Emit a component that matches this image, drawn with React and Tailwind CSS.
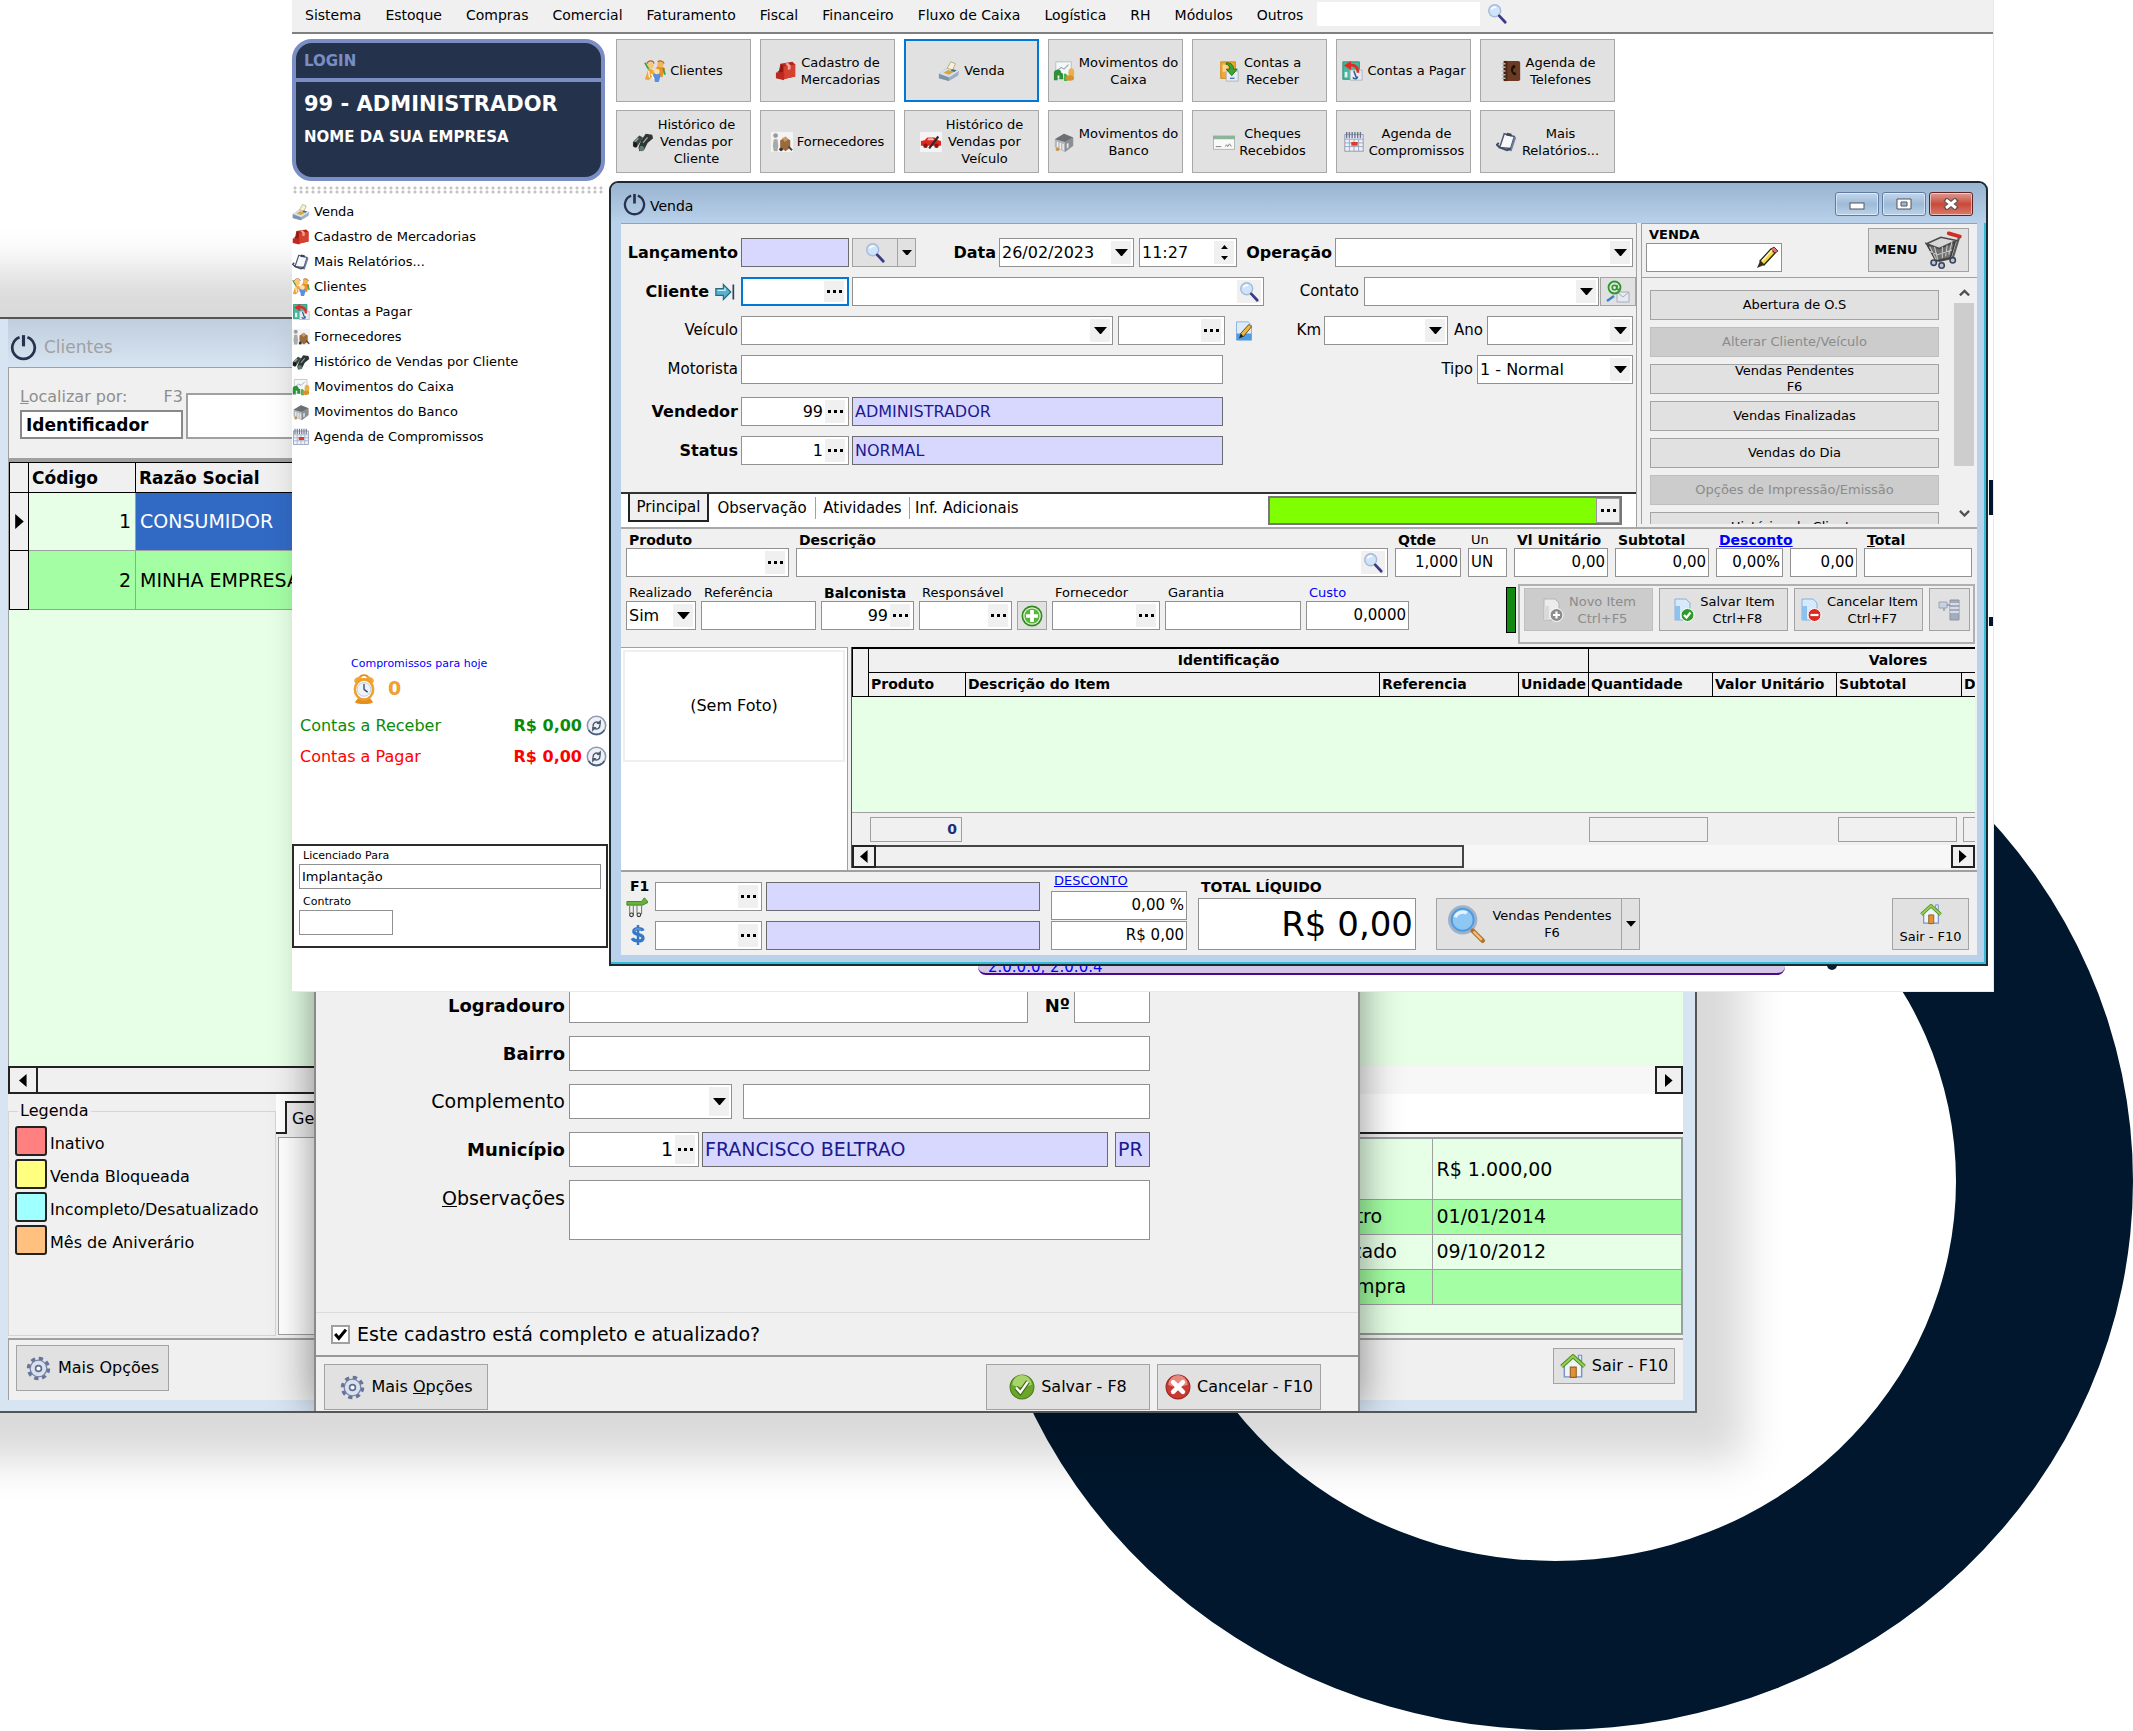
import clsx from 'clsx';

/* ---------- icons ---------- */

const Svg = ({ className = 'size-[22px]', children }) => (
  <svg viewBox="0 0 24 24" className={clsx('shrink-0', className)} fill="none" aria-hidden="true">
    {children}
  </svg>
);

const PowerIcon = ({ className }) => (
  <Svg className={className}>
    <path d="M8.5 2.8a10 10 0 1 0 7 0" stroke="#27324f" strokeWidth="2.4" />
    <path d="M12 1v10" stroke="#27324f" strokeWidth="2.8" />
  </Svg>
);

const ClientsIcon = ({ className }) => (
  <Svg className={className}>
    <path d="M1 21 5 9l5 2 3 10-4-3-4 4z" fill="#f0a73a" />
    <path d="m11 12 5-7 7 4-3 10-4-2-4 3z" fill="#e8912a" />
    <path d="M10 16c2-4 8-2 8 2l-2 6h-4z" fill="#5b8fe0" />
    <circle cx="7" cy="6" r="3.600" fill="#f6c777" />
    <circle cx="18" cy="4.500" r="3.400" fill="#f3b45a" />
    <circle cx="14" cy="12.500" r="3" fill="#fbe0ae" />
    <path d="M1 3l4 7M21 9l2 7" stroke="#3f9e45" strokeWidth="1.800" />
    <path d="M8 15l3 6M5 12l1 7" stroke="#fff" strokeWidth="1.300" />
    <path d="M3 4c2-4 7-4 8 0M15 2c2-2 6-1 7 2" stroke="#a8651a" strokeWidth="1.200" />
  </Svg>
);

const GoodsIcon = ({ className }) => (
  <Svg className={className}>
    <path d="M6 4 19 2l3 3v13l-13 3-6-4z" fill="#b5261b" />
    <path d="M9 7 22 5v13L9 21z" fill="#d6402f" />
    <path d="m6 4 3 3v6L1 14l5-3z" fill="#8c1912" />
    <path d="M1 14h9v8l-9-2z" fill="#c0281e" />
    <path d="M11 4l3 3v4l3-1V6l-3-3z" fill="#f2a397" />
  </Svg>
);

const RegisterIcon = ({ className }) => (
  <Svg className={className}>
    <path d="m1 15 8-6 14 3-1 5-10 6-11-3z" fill="#9aaec4" />
    <path d="m1 15 8-6 14 3-11 7z" fill="#d5dfe9" />
    <path d="m10 9 4-7 5 2-3 7z" fill="#f6f1d8" stroke="#b5aa7c" />
    <path d="m6 14 5-3 6 2-5 3z" fill="#d9a636" />
    <path d="m15 10 5 1-2 2-4-1z" fill="#50657f" />
    <path d="m1 15 11 4v4L1 20z" fill="#7f93ab" />
  </Svg>
);

const CashFlowIcon = ({ className }) => (
  <Svg className={className}>
    <path d="M3 2h17v18H3z" fill="#f4f6f8" stroke="#b5bcc4" />
    <path d="m5 11 4-3 3 2 5-5" stroke="#8ea5bd" strokeWidth="1.200" />
    <path d="M1 15a4 4 0 0 1 8-1l2 1v6H7v-4H5v5H1z" fill="#2f9137" />
    <path d="M12 15a3 3 0 0 1 4 3v5h-4z" fill="#4bb553" />
    <ellipse cx="20" cy="14" rx="3.200" ry="5" fill="#eab04a" />
    <ellipse cx="18.500" cy="19.500" rx="4.500" ry="3" fill="#d9912c" />
  </Svg>
);

const ReceiveIcon = ({ className }) => (
  <Svg className={className}>
    <path d="M3 2h16v18H3z" fill="#f5a831" stroke="#cf8418" />
    <path d="M5 5h6v8H5z" fill="#fcd48c" />
    <path d="M9 12h13v11H9z" fill="#e9edf2" stroke="#a9b3be" />
    <path d="M9 3c6 0 8 3 8 7h4l-6 7-6-7h4c0-3-1-5-4-5z" fill="#3ba535" stroke="#1f6f1b" />
    <path d="M13 20h5" stroke="#4a78b5" strokeWidth="1.500" />
  </Svg>
);

const PayIcon = ({ className }) => (
  <Svg className={className}>
    <path d="M2 2h18v19H2z" fill="#48b79d" stroke="#2b8b76" />
    <path d="M10 11h13v11H10z" fill="#e9edf2" stroke="#a9b3be" />
    <path d="M17 14c0-6-3-7-6-7v4L3 6l8-5v3c6 0 9 3 9 10z" fill="#e52a22" />
    <path d="M14 12l3 8M13 19c1 2 5 2 5-1" stroke="#2c5f9d" strokeWidth="1.700" />
    <path d="M4 13h3v6H4z" fill="#dff4ee" />
  </Svg>
);

const PhoneBookIcon = ({ className }) => (
  <Svg className={className}>
    <rect x="4" y="1" width="18" height="22" rx="2" fill="#6b3a22" />
    <rect x="4" y="1" width="4" height="22" fill="#4a2614" />
    <path d="M2 4h4M2 8h4M2 12h4M2 16h4M2 20h4" stroke="#b9b9b9" strokeWidth="1.600" />
    <path d="M13 7c-2 3-1 7 3 10l2-2-2-2-1 1c-1-2-1-4 0-5l1 0 1-2-2-2z" fill="#1d0f08" />
  </Svg>
);

const BinocularsIcon = ({ className }) => (
  <Svg className={className}>
    <path d="m1 12 7-7 4 2-3 5-4 6-4-1z" fill="#3f4744" />
    <path d="m10 10 5-7 7 1 1 4-6 5-4 8-5 1-1-4z" fill="#2e3533" />
    <path d="m3 12 4-4M12 13l5-6" stroke="#9ba5a1" strokeWidth="1.500" />
    <ellipse cx="10.500" cy="19" rx="2.600" ry="3" fill="#5d7d72" />
    <ellipse cx="3.500" cy="15" rx="2" ry="3" fill="#151918" />
  </Svg>
);

const SupplierIcon = ({ className }) => (
  <Svg className={className}>
    <path d="M0 1h24v22H0z" fill="#f4f4f4" />
    <circle cx="5" cy="5" r="2.600" fill="#9b9b9b" />
    <path d="M3 9h4l1 7-1 6H3l-1-6z" fill="#a9a9a9" />
    <path d="m10 10 6-3 5 3v8l-5 4-6-4z" fill="#9a6a3d" />
    <path d="m12 8 4-2 3 3-4 3z" fill="#c99a64" />
    <circle cx="11" cy="20" r="2" fill="#333" />
    <path d="m19 17 4 4" stroke="#444" strokeWidth="2" />
  </Svg>
);

const CarIcon = ({ className }) => (
  <Svg className={className}>
    <path d="M0 1h24v22H0z" fill="#f4f4f4" />
    <path d="m1 11 4-1 3-3h8l4 3 3 1v5H1z" fill="#e0261d" />
    <path d="m8 10 1-2h5l2 2z" fill="#f7b8b4" />
    <circle cx="6" cy="16" r="2.500" fill="#8d1410" />
    <circle cx="18" cy="16" r="2.500" fill="#8d1410" />
    <path d="m10 19 10-13" stroke="#2c2c2c" strokeWidth="2.400" />
  </Svg>
);

const BankIcon = ({ className }) => (
  <Svg className={className}>
    <path d="m2 9 10-6 10 4v9l-9 7-11-5z" fill="#b4b7ba" />
    <path d="m2 9 10-6 10 4-9 5z" fill="#6b6f74" />
    <path d="M13 12v11l9-7V7z" fill="#8b8f94" />
    <path d="M5 12v6M8 13v7M11 14v7" stroke="#f0f0f0" strokeWidth="1.500" />
    <path d="M15 14v5l2-1v-5z" fill="#e2e4e6" />
    <circle cx="5" cy="20" r="2" fill="#c7924b" />
  </Svg>
);

const ChequeIcon = ({ className }) => (
  <Svg className={className}>
    <rect x="0.500" y="6" width="23" height="14" fill="#f8faf8" stroke="#aab5ad" />
    <path d="M0 5h24v4H0z" fill="#8fb39a" />
    <path d="M3 17h6M13 17l2-2 1 2 2-3 2 3" stroke="#777" />
  </Svg>
);

const CalendarIcon = ({ className }) => (
  <Svg className={className}>
    <rect x="2" y="4" width="20" height="18" fill="#eef1f7" stroke="#8b95ad" />
    <path d="M4 1v7M7 1v7M10 1v7M13 1v7M16 1v7M19 1v7" stroke="#6a7590" strokeWidth="1.500" />
    <path d="M2 9h20M7 9v13M12 9v13M17 9v13M2 13h20M2 17h20" stroke="#9aa5c0" />
    <path d="M9 12h7v4H9z" fill="#e23a28" />
  </Svg>
);

const ReportIcon = ({ className }) => (
  <Svg className={className}>
    <path d="m9 3 11 3-4 13-12-1z" fill="#f7f8fa" stroke="#4d596e" strokeWidth="1.600" />
    <path d="m20 6 2 1-5 15-5-1 4-2z" fill="#6e809c" />
    <path d="m4 18-3-3 2-2M4 18l8 3 4-2" stroke="#3c4a63" strokeWidth="2" />
    <path d="m12 2 5 1v3l-6-1z" fill="#37445c" />
  </Svg>
);

const SearchIcon = ({ className }) => (
  <Svg className={className}>
    <circle cx="9.500" cy="8.500" r="6.500" fill="#cfe3fa" stroke="#a5bbd9" strokeWidth="1.600" />
    <path d="M6 7c1-2 3-3 5-2" stroke="#fff" strokeWidth="1.800" />
    <path d="m14.500 14 6.500 7" stroke="#3b3a86" strokeWidth="3" strokeLinecap="round" />
  </Svg>
);

const BigSearchIcon = ({ className }) => (
  <Svg className={className}>
    <circle cx="10" cy="9.500" r="8" fill="#4e9be0" stroke="#9fb2ca" strokeWidth="1.600" />
    <circle cx="10" cy="9.500" r="6" fill="#8ec6f4" />
    <path d="M5.500 8c1-3 5-4 7-2.500" stroke="#e4f3ff" strokeWidth="2" />
    <path d="m16 16 6 6" stroke="#b3712c" strokeWidth="2.800" strokeLinecap="round" />
    <path d="m16.500 16.500 5 5" stroke="#f2c078" strokeWidth="1.400" />
  </Svg>
);

const GearIcon = ({ className }) => (
  <Svg className={className}>
    <circle cx="12" cy="12" r="9.500" stroke="#65749c" strokeWidth="3.500" strokeDasharray="4 3.460" />
    <circle cx="12" cy="12" r="8" fill="#d9e1f0" stroke="#75839f" strokeWidth="1.200" />
    <circle cx="12" cy="12" r="2.800" fill="#f7f9fd" stroke="#5f6e8e" strokeWidth="1.600" />
  </Svg>
);

const HouseIcon = ({ className }) => (
  <Svg className={className}>
    <path d="M4 11v11h16V11l-8-7z" fill="#eef3fc" stroke="#7691c9" strokeWidth="1.300" />
    <path d="M17 2h3v6l-3-3z" fill="#dfe8f8" stroke="#7691c9" />
    <path d="M1.500 12.500 12 3l10.500 9.500" stroke="#4f8c1f" strokeWidth="3.800" strokeLinejoin="round" />
    <path d="M1.500 12.500 12 3l10.500 9.500" stroke="#93cf55" strokeWidth="2" strokeLinejoin="round" />
    <path d="M9.500 13h5.500v9.500H9.500z" fill="#dc9339" stroke="#9c5d17" />
  </Svg>
);

const CheckIcon = ({ className }) => (
  <Svg className={className}>
    <circle cx="12" cy="12" r="11" fill="#6ba52c" stroke="#4c7d1c" />
    <path d="M3 10a9 9 0 0 1 18 0c-5 2-13 3-18 0z" fill="#a9d36c" />
    <path d="m6.500 12.500 4 4.500L17.500 7" stroke="#3f6a14" strokeWidth="4.200" />
    <path d="m6.500 12.500 4 4.500L17.500 7" stroke="#fff" strokeWidth="2.200" />
  </Svg>
);

const CancelIcon = ({ className }) => (
  <Svg className={className}>
    <circle cx="12" cy="12" r="11" fill="#c93a33" stroke="#9c231e" />
    <path d="M3 10a9 9 0 0 1 18 0c-5 2-13 3-18 0z" fill="#e68a80" />
    <path d="m7.500 7.500 9 9m0-9-9 9" stroke="#fff" strokeWidth="4.200" strokeLinecap="round" />
  </Svg>
);

const PlusIcon = ({ className }) => (
  <Svg className={className}>
    <circle cx="12" cy="12" r="10.500" fill="#e9f7e2" stroke="#2e8b1c" strokeWidth="1.800" />
    <circle cx="12" cy="12" r="8.300" fill="#58b63c" />
    <path d="M12 5.500v13M5.500 12h13" stroke="#fff" strokeWidth="4" />
  </Svg>
);

const PencilIcon = ({ className }) => (
  <Svg className={className}>
    <path d="m5 15 11-12 4 4L9 19z" fill="#f5d640" stroke="#2a2410" strokeWidth="1.400" />
    <path d="m16 3 3-2 4 4-3 2z" fill="#e46f6f" stroke="#6b2a2a" />
    <path d="m5 15 4 4-7 3z" fill="#3a2c18" />
    <path d="m7 15 10-11" stroke="#fff6b8" strokeWidth="1.500" />
  </Svg>
);

const EditPageIcon = ({ className }) => (
  <Svg className={className}>
    <path d="M3 1h14l4 4v18H3z" fill="#dcecfa" stroke="#7faad6" />
    <path d="M3 15h18v8H3z" fill="#4d9be0" />
    <path d="m8 15 10-11 3 3-10 12z" fill="#f0b73c" stroke="#4b3510" />
    <path d="m8 15 3 4-5 2z" fill="#2d2110" />
  </Svg>
);

const CartIcon = ({ className }) => (
  <Svg className={className}>
    <path d="M15 1.500l7 2" stroke="#cf2d25" strokeWidth="2.400" strokeLinecap="round" />
    <path d="m21.500 4-4 13-9 2" stroke="#5b5b5b" strokeWidth="1.400" />
    <path d="m1 8 8 3 10-4-3 10-9 2z" fill="#6f6f6f" stroke="#3d3d3d" />
    <path d="m1 8 9-4 10 2-11 5z" fill="#d7d7d7" stroke="#4a4a4a" />
    <path d="m3 10 4 8m-1-8 2 8m3-8v7m3-8-1 7m4-9-2 8M3 13l5 2 9-3" stroke="#c6c6c6" strokeWidth="0.700" />
    <circle cx="5.500" cy="20" r="1.700" fill="#b9c4e0" stroke="#3b4358" />
    <circle cx="10.500" cy="21.800" r="1.700" fill="#b9c4e0" stroke="#3b4358" />
    <circle cx="17.500" cy="18.500" r="1.700" fill="#b9c4e0" stroke="#3b4358" />
  </Svg>
);

const MailIcon = ({ className }) => (
  <Svg className={className}>
    <path d="M11 12h12v10H11z" fill="#e6e9f0" stroke="#a6adbd" />
    <path d="m11 12 6 5 6-5" stroke="#a6adbd" />
    <circle cx="8.500" cy="7.500" r="6" stroke="#2f9a2c" strokeWidth="1.800" />
    <circle cx="8.500" cy="7.500" r="2.300" stroke="#2f9a2c" strokeWidth="1.600" />
    <path d="M11 5v4c1 1 3 1 3.500-1" stroke="#2f9a2c" strokeWidth="1.600" />
    <path d="m1 21 7-5" stroke="#3a7fd0" strokeWidth="2.400" />
  </Svg>
);

const JumpIcon = ({ className }) => (
  <Svg className={className}>
    <path d="M1 8h9V3l9 9-9 9v-5H1z" fill="#55b3cf" stroke="#246a83" strokeWidth="1.400" />
    <path d="M3 10h9V7" stroke="#c9edf7" strokeWidth="1.600" />
    <path d="M22 3v18" stroke="#2d3f5a" strokeWidth="2" />
  </Svg>
);

const TableIcon = ({ className }) => (
  <Svg className={className}>
    <path d="M1 6h16l3-4 2 2 2 3-6 3H1z" fill="#66b53a" stroke="#447e22" />
    <path d="M4 11v8M8 11v10M12 11v8M17 11v9" stroke="#7b7f7b" strokeWidth="1.200" />
    <circle cx="6" cy="20.500" r="2" stroke="#333" strokeWidth="1.200" />
    <circle cx="14" cy="20.500" r="2" stroke="#333" strokeWidth="1.200" />
  </Svg>
);

const DollarIcon = ({ className }) => (
  <Svg className={className}>
    <path d="M18 7c-1-3-11-4-11 1 0 4 11 2.500 11 7.500 0 5-11 4.500-13 .5" stroke="#3578c4" strokeWidth="4" />
    <path d="M12 0v24" stroke="#3578c4" strokeWidth="3" />
    <path d="M16 6c-2-2-8-2-8 1" stroke="#7db2ea" strokeWidth="1.200" />
  </Svg>
);

const AlarmIcon = ({ className }) => (
  <svg viewBox="0 0 24 34" className={clsx('shrink-0', className)} fill="none" aria-hidden="true">
    <path d="M7 6c1-5 9-5 10 0" stroke="#e08e1d" strokeWidth="2" />
    <ellipse cx="5.500" cy="7.500" rx="4.500" ry="3" fill="#f2a733" transform="rotate(-30 5.500 7.500)" />
    <ellipse cx="18.500" cy="7.500" rx="4.500" ry="3" fill="#f2a733" transform="rotate(30 18.500 7.500)" />
    <path d="M6 27h12l4 5c-5 3-15 3-20 0z" fill="#e58f1c" />
    <ellipse cx="12" cy="18" rx="10" ry="11" fill="#fff" stroke="#ef9f2b" strokeWidth="2.800" />
    <circle cx="12" cy="18" r="7.500" fill="#eef2fa" stroke="#b9c5dc" />
    <path d="M12 18v-6m0 6 4 3" stroke="#3c4a70" strokeWidth="1.500" />
  </svg>
);

const RefreshIcon = ({ className }) => (
  <Svg className={className}>
    <circle cx="12" cy="12" r="10.500" fill="#eef2f6" stroke="#8d9aae" strokeWidth="1.800" />
    <path d="M3 17a10.500 10.500 0 0 0 18 0" stroke="#4a5f80" strokeWidth="2" />
    <path d="M8 13c0-5 4-6 7-4M16 11c0 5-4 6-7 4" stroke="#4c5a70" strokeWidth="1.700" />
    <path d="m17 5 0 6-5-1zM7 19l0-6 5 1z" fill="#4c5a70" />
  </Svg>
);

const DocIcon = ({ className, badge = '#2f9a2c', mark = 'm10.500 17 2.500 2.500 4-5', muted }) => (
  <Svg className={className}>
    <path d="M3 1h11l4 4v17H3z" fill={muted ? '#ececec' : '#d7e9fa'} stroke={muted ? '#b5b5b5' : '#86b1dc'} />
    <path d="M3 8h5v14H3z" fill={muted ? '#dadada' : '#8cc2f0'} />
    <circle cx="15.500" cy="17" r="6.500" fill={badge} stroke="#fff" />
    <path d={mark} transform="translate(1.500 0)" stroke="#fff" strokeWidth="2.200" />
  </Svg>
);

const ServerIcon = ({ className }) => (
  <Svg className={className}>
    <path d="M12 2h9v20h-9z" fill="#a3adbd" stroke="#8a94a5" />
    <path d="M12 6h9M12 10h9M12 14h9" stroke="#e6ebf3" strokeWidth="1.500" />
    <path d="M1 4h8v6H1z" fill="#c8d2e2" stroke="#9aa4b6" />
    <path d="M9 7h3M6 10v3" stroke="#8a94a5" strokeWidth="1.300" />
  </Svg>
);

const Triangle = ({ className = 'w-[13px]', d = 'M0 0h12L6 7z', box = '0 0 12 7' }) => (
  <svg viewBox={box} className={className} aria-hidden="true">
    <path d={d} fill="#000" />
  </svg>
);

const Dots = () => (
  <svg viewBox="0 0 15 3" className="w-[15px]" aria-hidden="true">
    <path d="M0 0h3v3H0zM6 0h3v3H6zM12 0h3v3h-3z" fill="#000" />
  </svg>
);

/* ---------- form controls ---------- */

const Field = ({ id, label, value = '', className, locked, focused, right, size = 'text-[16px]', h = 'h-[29px]', children }) => (
  <div
    className={clsx(
      'flex min-w-0 border',
      h,
      className,
      locked ? 'border-[#6c6c70] bg-[#d8d8ff]' : 'bg-white',
      focused ? 'border-2 border-[#0078d7]' : !locked && 'border-[#919191]',
    )}
  >
    <input
      id={id}
      aria-label={label}
      defaultValue={value}
      readOnly={locked}
      className={clsx(
        'w-full min-w-0 flex-1 bg-transparent px-[2px] outline-none',
        size,
        locked && 'text-[#1b1b8f]',
        right && 'text-right',
      )}
    />
    {children}
  </div>
);

const Lookup = ({ label = 'Localizar' }) => (
  <button type="button" aria-label={label} className="my-[2px] mr-[3px] flex w-[20px] shrink-0 items-center justify-center bg-[#f0f0f0]">
    <Dots />
  </button>
);

const Select = ({ id, label, value = '', className, h = 'h-[29px]' }) => (
  <div className={clsx('flex min-w-0 border border-[#919191] bg-white', h, className)}>
    <select id={id} aria-label={label} className="w-full min-w-0 flex-1 appearance-none bg-transparent px-[2px] text-[16px] outline-none">
      <option>{value}</option>
    </select>
    <span className="my-[2px] mr-[2px] flex w-[20px] shrink-0 items-center justify-center bg-[#f0f0f0]">
      <Triangle />
    </span>
  </div>
);

const Label = ({ htmlFor, bold, size, className, children }) => (
  <label
    htmlFor={htmlFor}
    className={clsx(
      'shrink-0 text-right whitespace-nowrap',
      bold && 'font-bold',
      size || (bold ? 'text-[16px]' : 'text-[15px]'),
      className,
    )}
  >
    {children}
  </label>
);

const Stacked = ({ id, label, bold, className, labelClass, children }) => (
  <div className={clsx('flex flex-col', className)}>
    <label
      htmlFor={id}
      className={clsx('h-[16px] pl-[3px] leading-[16px] whitespace-nowrap', bold ? 'text-[14px] font-bold' : 'text-[13px]', labelClass)}
    >
      {label}
    </label>
    {children}
  </div>
);

const PushButton = ({ className, disabled, children, ...rest }) => (
  <button
    type="button"
    disabled={disabled}
    className={clsx(
      'flex shrink-0 items-center justify-center border',
      disabled ? 'border-[#bfbfbf] bg-[#cccccc] text-[#8b8b8b]' : 'border-[#a3a3a3] bg-[#e1e1e1]',
      className,
    )}
    {...rest}
  >
    {children}
  </button>
);

/* ---------- main window ---------- */

const menuItems = [
  'Sistema', 'Estoque', 'Compras', 'Comercial', 'Faturamento', 'Fiscal',
  'Financeiro', 'Fluxo de Caixa', 'Logística', 'RH', 'Módulos', 'Outros',
];

const toolbar = [
  { icon: ClientsIcon, lines: ['Clientes'] },
  { icon: GoodsIcon, lines: ['Cadastro de', 'Mercadorias'] },
  { icon: RegisterIcon, lines: ['Venda'], active: true },
  { icon: CashFlowIcon, lines: ['Movimentos do', 'Caixa'] },
  { icon: ReceiveIcon, lines: ['Contas a', 'Receber'] },
  { icon: PayIcon, lines: ['Contas a Pagar'] },
  { icon: PhoneBookIcon, lines: ['Agenda de', 'Telefones'] },
  { icon: BinocularsIcon, lines: ['Histórico de', 'Vendas por', 'Cliente'] },
  { icon: SupplierIcon, lines: ['Fornecedores'] },
  { icon: CarIcon, lines: ['Histórico de', 'Vendas por', 'Veículo'] },
  { icon: BankIcon, lines: ['Movimentos do', 'Banco'] },
  { icon: ChequeIcon, lines: ['Cheques', 'Recebidos'] },
  { icon: CalendarIcon, lines: ['Agenda de', 'Compromissos'] },
  { icon: ReportIcon, lines: ['Mais', 'Relatórios...'] },
];

const shortcuts = [
  [RegisterIcon, 'Venda'],
  [GoodsIcon, 'Cadastro de Mercadorias'],
  [ReportIcon, 'Mais Relatórios...'],
  [ClientsIcon, 'Clientes'],
  [PayIcon, 'Contas a Pagar'],
  [SupplierIcon, 'Fornecedores'],
  [BinocularsIcon, 'Histórico de Vendas por Cliente'],
  [CashFlowIcon, 'Movimentos do Caixa'],
  [BankIcon, 'Movimentos do Banco'],
  [CalendarIcon, 'Agenda de Compromissos'],
];

const MenuBar = () => (
  <nav className="flex h-[34px] items-start border-b-2 border-[#808080] bg-[#f0f0f0] pl-[13px]">
    <ul className="flex h-[31px] items-center gap-[24px] text-[14px] whitespace-nowrap">
      {menuItems.map((item) => (
        <li key={item}>
          <button type="button">{item}</button>
        </li>
      ))}
    </ul>
    <input aria-label="Pesquisar no menu" className="mt-[2px] ml-[14px] h-[24px] w-[163px] bg-white outline-none" />
    <SearchIcon className="mt-[3px] ml-[6px] size-[22px]" />
  </nav>
);

const Toolbar = () => (
  <div className="flex flex-wrap gap-x-[9px] gap-y-[8px] pt-[5px] pb-[8px] pl-[7px] pr-[370px]">
    {toolbar.map(({ icon: Icon, lines, active }) => (
      <button
        key={lines.join(' ')}
        type="button"
        className={clsx(
          'flex h-[63px] w-[135px] items-center justify-center gap-[4px] bg-[#e1e1e1] text-[13px] leading-[17px] whitespace-nowrap',
          active ? 'border-2 border-[#0078d7]' : 'border border-[#a8a8a8]',
        )}
      >
        <Icon className="size-[22px]" />
        <span className="flex flex-col">
          {lines.map((line) => (
            <span key={line}>{line}</span>
          ))}
        </span>
      </button>
    ))}
  </div>
);

const Balance = ({ label, tone }) => (
  <div className={clsx('flex h-[31px] items-center pr-[2px] pl-[8px] text-[16px]', tone)}>
    <span className="flex-1">{label}</span>
    <strong>R$ 0,00</strong>
    <button type="button" aria-label={`Atualizar ${label}`} className="ml-[4px]">
      <RefreshIcon className="size-[21px]" />
    </button>
  </div>
);

const Sidebar = () => (
  <aside className="flex w-[317px] shrink-0 flex-col pt-[5px]">
    <div className="flex h-[142px] w-[313px] flex-col rounded-[20px] border-4 border-[#7a8dc4] bg-[#24334b] font-bold text-white">
      <div className="flex h-[39px] items-center border-b-4 border-[#7a8dc4] pt-[2px] pl-[8px] text-[15px] text-[#7a8dc4]">LOGIN</div>
      <div className="mt-[6px] pl-[8px] text-[21px] leading-[32px]">99 - ADMINISTRADOR</div>
      <div className="pl-[8px] text-[15px] leading-[34px]">NOME DA SUA EMPRESA</div>
    </div>
    <div className="mt-[5px] h-[8px] w-[313px] bg-[radial-gradient(circle,#c4c4c4_1px,transparent_2px)] bg-[size:6px_4px]" />
    <ul className="mt-[5px] text-[13px]">
      {shortcuts.map(([Icon, text]) => (
        <li key={text}>
          <button type="button" className="flex h-[25px] items-center gap-[4px]">
            <Icon className="size-[18px]" />
            {text}
          </button>
        </li>
      ))}
    </ul>
    <div className="mt-auto mb-[72px]">
      <div className="pl-[59px] text-[11px] leading-[16px] text-[#0000ff]">Compromissos para hoje</div>
      <div className="mb-[6px] flex h-[32px] items-center gap-[13px] pl-[61px] text-[19px] font-bold text-[#f0a030]">
        <AlarmIcon className="h-[31px] w-[22px]" />0
      </div>
      <Balance label="Contas a Receber" tone="text-[#0a8a0a]" />
      <Balance label="Contas a Pagar" tone="text-[#ff0000]" />
    </div>
    <div className="mb-[43px] flex h-[104px] w-[316px] flex-col border-2 border-[#2b2b2b] px-[5px] pt-[2px]">
      <label htmlFor="licenciado" className="pl-[4px] text-[11px] leading-[16px]">Licenciado Para</label>
      <Field id="licenciado" value="Implantação" size="text-[13px]" h="h-[25px]" />
      <label htmlFor="contrato" className="mt-[5px] pl-[4px] text-[11px] leading-[16px]">Contrato</label>
      <Field id="contrato" size="text-[13px]" h="h-[25px]" className="w-[94px]" />
    </div>
  </aside>
);

const CaptionButton = ({ label, danger, children }) => (
  <button
    type="button"
    aria-label={label}
    className={clsx(
      'flex h-[24px] w-[44px] items-center justify-center rounded-[3px] border shadow-[inset_0_0_0_1px_rgba(255,255,255,0.5)]',
      danger
        ? 'border-[#5d2222] bg-linear-to-b from-[#dc9a92] via-[#c8493a] to-[#d9796a]'
        : 'border-[#5f7ba0] bg-linear-to-b from-[#c3d6ec] via-[#9dbad8] to-[#bcd3ec]',
    )}
  >
    {children}
  </button>
);

const TitleBar = () => (
  <header className="flex h-[40px] items-center rounded-t-[8px] bg-linear-to-b from-[#99b4d1] to-[#b9d1ea] pt-[2px] pr-[13px] pl-[12px]">
    <PowerIcon className="size-[23px]" />
    <h2 className="ml-[4px] flex-1 pt-[5px] text-[14px]">Venda</h2>
    <div className="flex gap-[3px]">
      <CaptionButton label="Minimizar">
        <svg viewBox="0 0 16 8" className="mt-[4px] w-[16px]"><rect x="1" y="1" width="14" height="6" fill="#fff" stroke="#555" /></svg>
      </CaptionButton>
      <CaptionButton label="Restaurar">
        <svg viewBox="0 0 16 12" className="w-[16px]"><path d="M1 1h14v10H1zM5 4v4h6V4z" fill="#fff" stroke="#555" fillRule="evenodd" /></svg>
      </CaptionButton>
      <CaptionButton label="Fechar" danger>
        <svg viewBox="0 0 16 12" className="w-[16px]">
          <path d="m2 1 12 10M14 1 2 11" stroke="#555" strokeWidth="5" />
          <path d="m3 2 10 8M13 2 3 10" stroke="#fff" strokeWidth="3" />
        </svg>
      </CaptionButton>
    </div>
  </header>
);

const SaleForm = () => (
  <form className="flex flex-1 flex-col border-t border-r border-[#a0a0a0] pt-[14px]">
    <div className="flex flex-col gap-[10px] pr-[3px]">
      <div className="flex items-center">
        <Label htmlFor="lancamento" bold className="w-[117px]">Lançamento</Label>
        <Field id="lancamento" locked className="ml-[3px] w-[108px]" />
        <PushButton aria-label="Pesquisar lançamento" className="ml-[3px] h-[29px] w-[46px]">
          <SearchIcon className="size-[22px]" />
        </PushButton>
        <PushButton aria-label="Opções de pesquisa" className="h-[29px] w-[18px] border-l-0">
          <Triangle className="w-[10px]" />
        </PushButton>
        <Label htmlFor="data" bold className="w-[80px]">Data</Label>
        <Select id="data" value="26/02/2023" className="ml-[3px] w-[135px]" />
        <Field label="Hora" value="11:27" className="ml-[5px] w-[98px]">
          <span className="my-[2px] mr-[2px] flex w-[20px] flex-col items-center justify-around bg-[#f0f0f0]">
            <Triangle className="w-[7px]" d="M6 0l6 7H0z" />
            <Triangle className="w-[7px]" />
          </span>
        </Field>
        <Label htmlFor="operacao" bold className="w-[95px]">Operação</Label>
        <Select id="operacao" className="ml-[3px] flex-1" />
      </div>
      <div className="-mr-[3px] flex items-center">
        <Label htmlFor="cliente" bold className="flex w-[117px] items-center justify-end gap-[6px]">
          Cliente <JumpIcon className="mr-[3px] size-[20px]" />
        </Label>
        <Field id="cliente" focused className="ml-[3px] w-[108px]">
          <Lookup label="Localizar cliente" />
        </Field>
        <Field label="Nome do cliente" className="ml-[3px] flex-1">
          <button type="button" aria-label="Pesquisar cliente" className="my-[2px] mr-[2px] flex w-[24px] items-center justify-center bg-[#f0f0f0]">
            <SearchIcon className="size-[22px]" />
          </button>
        </Field>
        <Label htmlFor="contato" className="w-[95px]">Contato</Label>
        <Select id="contato" className="ml-[5px] w-[235px]" />
        <PushButton aria-label="Enviar e-mail" className="ml-[1px] h-[29px] w-[36px]">
          <MailIcon className="size-[24px]" />
        </PushButton>
      </div>
      <div className="flex items-center">
        <Label htmlFor="veiculo" className="w-[117px]">Veículo</Label>
        <Select id="veiculo" className="ml-[3px] flex-1" />
        <Field label="Código do veículo" className="ml-[5px] w-[107px]">
          <Lookup label="Localizar veículo" />
        </Field>
        <button type="button" aria-label="Editar veículo" className="ml-[9px]">
          <EditPageIcon className="size-[20px]" />
        </button>
        <Label htmlFor="km" className="w-[67px]">Km</Label>
        <Select id="km" className="ml-[3px] w-[124px]" />
        <Label htmlFor="ano" className="w-[35px]">Ano</Label>
        <Select id="ano" className="ml-[4px] w-[146px]" />
      </div>
      <div className="flex items-center">
        <Label htmlFor="motorista" className="w-[117px]">Motorista</Label>
        <Field id="motorista" className="ml-[3px] flex-1" />
        <Label htmlFor="tipo" className="w-[250px]">Tipo</Label>
        <Select id="tipo" value="1 - Normal" className="ml-[4px] w-[156px]" />
      </div>
    </div>
    <div className="mt-[13px] mr-[413px] flex flex-col gap-[10px]">
      <div className="flex items-center">
        <Label htmlFor="vendedor" bold className="w-[117px]">Vendedor</Label>
        <Field id="vendedor" value="99" right className="ml-[3px] w-[108px]">
          <Lookup label="Localizar vendedor" />
        </Field>
        <Field label="Nome do vendedor" value="ADMINISTRADOR" locked className="ml-[3px] flex-1" />
      </div>
      <div className="flex items-center">
        <Label htmlFor="status" bold className="w-[117px]">Status</Label>
        <Field id="status" value="1" right className="ml-[3px] w-[108px]">
          <Lookup label="Localizar status" />
        </Field>
        <Field label="Descrição do status" value="NORMAL" locked className="ml-[3px] flex-1" />
      </div>
    </div>
    <div className="mt-auto flex h-[35px] items-start border-t-2 border-[#333] bg-white pl-[7px] text-[15px]">
      <button type="button" className="h-[28px] w-[81px] border-r-2 border-b-2 border-l-2 border-[#222] bg-[#f0f0f0]">Principal</button>
      <button type="button" className="mt-[3px] h-[22px] w-[107px] border-r border-[#a0a0a0]">Observação</button>
      <button type="button" className="mt-[3px] h-[22px] w-[94px] border-r border-[#a0a0a0]">Atividades</button>
      <button type="button" className="mt-[3px] h-[22px] pl-[5px]">Inf. Adicionais</button>
      <div className="mt-[2px] mr-[14px] ml-auto flex h-[29px] w-[354px] border-2 border-[#777] bg-[#80ff00]">
        <input aria-label="Situação" className="min-w-0 flex-1 bg-transparent outline-none" />
        <button type="button" aria-label="Alterar situação" className="flex w-[24px] items-center justify-center border border-[#999] bg-[#f0f0f0]">
          <Dots />
        </button>
      </div>
    </div>
  </form>
);

const actions = [
  { lines: ['Abertura de O.S'] },
  { lines: ['Alterar Cliente/Veículo'], disabled: true },
  { lines: ['Vendas Pendentes', 'F6'] },
  { lines: ['Vendas Finalizadas'] },
  { lines: ['Vendas do Dia'] },
  { lines: ['Opções de Impressão/Emissão'], disabled: true },
  { lines: ['Histórico do Cliente'] },
];

const ActionPanel = () => (
  <div className="mb-[3px] ml-[4px] flex h-[301px] w-[336px] shrink-0 flex-col border-t border-l border-[#a0a0a0]">
    <div className="flex h-[54px] items-end justify-between border-b border-[#a0a0a0] pr-[8px] pb-[5px] pl-[4px]">
      <div className="flex flex-col">
        <label htmlFor="venda" className="pl-[3px] text-[13px] leading-[16px] font-bold">VENDA</label>
        <Field id="venda" className="w-[136px]">
          <PencilIcon className="mt-[2px] mr-[2px] size-[24px]" />
        </Field>
      </div>
      <PushButton className="h-[44px] w-[101px] gap-[7px] text-[13px] font-bold">
        MENU <CartIcon className="size-[38px]" />
      </PushButton>
    </div>
    <div className="flex min-h-0 flex-1 pt-[4px]">
      <div className="flex min-w-0 flex-1 flex-col gap-[7px] overflow-hidden pt-[8px] pr-[15px] pl-[8px]">
        {actions.map(({ lines, disabled }) => (
          <PushButton key={lines[0]} disabled={disabled} className="h-[30px] flex-col overflow-hidden text-[13px] leading-[16px]">
            {lines.map((line) => (
              <span key={line}>{line}</span>
            ))}
          </PushButton>
        ))}
      </div>
      <div className="mr-[3px] flex w-[20px] shrink-0 flex-col items-center bg-[#f0f0f0]">
        <svg viewBox="0 0 12 8" className="my-[7px] w-[11px]"><path d="m1 7 5-5 5 5" fill="none" stroke="#505050" strokeWidth="2.500" /></svg>
        <div className="h-[163px] w-full bg-[#cdcdcd]" />
        <svg viewBox="0 0 12 8" className="mt-auto mb-[7px] w-[11px]"><path d="m1 1 5 5 5-5" fill="none" stroke="#505050" strokeWidth="2.500" /></svg>
      </div>
    </div>
  </div>
);

const ItemButton = ({ icon, lines, disabled }) => (
  <PushButton disabled={disabled} className="h-[43px] w-[129px] gap-[4px] text-[13px] leading-[17px]">
    {icon}
    <span className="flex flex-col whitespace-nowrap">
      {lines.map((line) => (
        <span key={line}>{line}</span>
      ))}
    </span>
  </PushButton>
);

const ItemPanel = () => (
  <div className="flex h-[120px] flex-col border-t-2 border-[#a8a8a8] pt-[3px]">
    <div className="flex gap-[7px] pr-[5px] pl-[5px]">
      <Stacked id="produto" label="Produto" bold className="w-[163px]">
        <Field id="produto"><Lookup label="Localizar produto" /></Field>
      </Stacked>
      <Stacked id="descricao" label="Descrição" bold className="flex-1">
        <Field id="descricao">
          <button type="button" aria-label="Pesquisar produto" className="my-[2px] mr-[2px] flex w-[24px] items-center justify-center bg-[#f0f0f0]">
            <SearchIcon className="size-[22px]" />
          </button>
        </Field>
      </Stacked>
      <Stacked id="qtde" label="Qtde" bold className="w-[66px]">
        <Field id="qtde" value="1,000" right size="text-[15px]" />
      </Stacked>
      <Stacked id="un" label="Un" className="w-[39px]">
        <Field id="un" value="UN" size="text-[15px]" />
      </Stacked>
      <Stacked id="unitario" label="Vl Unitário" bold className="w-[94px]">
        <Field id="unitario" value="0,00" right size="text-[15px]" />
      </Stacked>
      <Stacked id="subtotal" label="Subtotal" bold className="w-[94px]">
        <Field id="subtotal" value="0,00" right size="text-[15px]" />
      </Stacked>
      <Stacked id="desconto" label={<a href="#desconto" className="text-[#0000ff] underline">Desconto</a>} bold className="w-[67px]">
        <Field id="desconto" value="0,00%" right size="text-[15px]" />
      </Stacked>
      <div className="flex w-[67px] items-end">
        <Field label="Desconto em reais" value="0,00" right size="text-[15px]" />
      </div>
      <Stacked id="total" label={<><u>T</u>otal</>} bold className="w-[108px]">
        <Field id="total" size="text-[15px]" />
      </Stacked>
    </div>
    <div className="flex flex-1 items-start gap-[5px] pl-[5px]">
      <Stacked id="realizado" label="Realizado" className="w-[70px] pt-[8px]">
        <Select id="realizado" value="Sim" />
      </Stacked>
      <Stacked id="referencia" label="Referência" className="w-[115px] pt-[8px]">
        <Field id="referencia" />
      </Stacked>
      <Stacked id="balconista" label="Balconista" bold className="w-[93px] pt-[8px]">
        <Field id="balconista" value="99" right><Lookup label="Localizar balconista" /></Field>
      </Stacked>
      <Stacked id="responsavel" label="Responsável" className="w-[93px] pt-[8px]">
        <Field id="responsavel"><Lookup label="Localizar responsável" /></Field>
      </Stacked>
      <PushButton aria-label="Adicionar responsável" className="mt-[24px] h-[29px] w-[30px]">
        <PlusIcon className="size-[22px]" />
      </PushButton>
      <Stacked id="fornecedor" label="Fornecedor" className="w-[108px] pt-[8px]">
        <Field id="fornecedor"><Lookup label="Localizar fornecedor" /></Field>
      </Stacked>
      <Stacked id="garantia" label="Garantia" className="w-[136px] pt-[8px]">
        <Field id="garantia" />
      </Stacked>
      <Stacked id="custo" label="Custo" className="w-[103px] pt-[8px]" labelClass="text-[#0000ff]">
        <Field id="custo" value="0,0000" right size="text-[15px]" />
      </Stacked>
      <div className="mt-[10px] -mr-[3px] ml-auto h-[46px] w-[10px] border border-black bg-[#128a12]" />
      <div className="mt-[7px] mr-[2px] flex h-[60px] gap-[6px] border-2 border-[#b0b0b0] pt-[2px] pr-[3px] pl-[4px]">
        <ItemButton disabled icon={<DocIcon className="size-[24px]" muted badge="#8d8d8d" mark="M14 13.500v7M10.500 17h7" />} lines={['Novo Item', 'Ctrl+F5']} />
        <ItemButton icon={<DocIcon className="size-[24px]" />} lines={['Salvar Item', 'Ctrl+F8']} />
        <ItemButton icon={<DocIcon className="size-[24px]" badge="#dc2a20" mark="M10 17h8" />} lines={['Cancelar Item', 'Ctrl+F7']} />
        <PushButton aria-label="Rede" className="h-[43px] w-[41px]">
          <ServerIcon className="size-[24px]" />
        </PushButton>
      </div>
    </div>
  </div>
);

const ScrollArrow = ({ left, className = 'w-[24px]' }) => (
  <button type="button" aria-label={left ? 'Rolar para a esquerda' : 'Rolar para a direita'} className={clsx('flex shrink-0 items-center justify-center border-2 border-[#222] bg-[#f0f0f0]', className)}>
    <svg viewBox="0 0 7 12" className="h-[13px]" aria-hidden="true">
      <path d={left ? 'M7 0v12L0 6z' : 'M0 0v12l7-6z'} />
    </svg>
  </button>
);

const columns = ['Produto', 'Descrição do Item', 'Referencia', 'Unidade', 'Quantidade', 'Valor Unitário', 'Subtotal', 'Desconto'];

const ItemsGrid = () => (
  <div className="mr-[2px] mb-[2px] ml-[3px] flex min-w-0 flex-1 flex-col overflow-hidden border-l border-[#555]">
    <table className="w-[1355px] shrink-0 table-fixed border-collapse text-left text-[14px]">
      <colgroup>
        <col className="w-[16px]" />
        <col className="w-[97px]" />
        <col className="w-[414px]" />
        <col className="w-[139px]" />
        <col className="w-[70px]" />
        <col className="w-[124px]" />
        <col className="w-[124px]" />
        <col className="w-[125px]" />
        <col className="w-[246px]" />
      </colgroup>
      <thead>
        <tr className="h-[24px]">
          <th rowSpan={2} className="border border-t-2 border-black" />
          <th colSpan={4} className="border border-t-2 border-black p-0 text-center">Identificação</th>
          <th colSpan={4} className="border border-t-2 border-black p-0 text-center">Valores</th>
        </tr>
        <tr className="h-[24px]">
          {columns.map((column) => (
            <th key={column} className="border border-black p-0 pl-[2px] whitespace-nowrap">{column}</th>
          ))}
        </tr>
      </thead>
    </table>
    <div className="flex-1 bg-[#e6ffe6]" />
    <div className="flex h-[33px] w-[1355px] shrink-0 items-center border-t border-[#a0a0a0] pl-[18px]">
      <output className="h-[25px] w-[92px] border border-[#a0a0a0] pr-[4px] text-right text-[14px] leading-[23px] font-bold text-[#1b2d7f]">0</output>
      <output className="ml-[627px] h-[25px] w-[119px] border border-[#a0a0a0]" />
      <output className="ml-[130px] h-[25px] w-[119px] border border-[#a0a0a0]" />
      <output className="ml-[6px] h-[25px] w-[119px] border border-[#a0a0a0]" />
    </div>
    <div className="flex h-[23px] shrink-0 bg-[#f7f7f7]">
      <ScrollArrow left />
      <div className="w-[588px] border-2 border-l-0 border-[#444] bg-[#f0f0f0]" />
      <div className="flex-1" />
      <ScrollArrow />
    </div>
  </div>
);

const PaymentBar = () => (
  <div className="flex h-[85px] items-end border-t-2 border-[#a0a0a0] pr-[8px] pb-[5px] pl-[5px]">
    <div className="flex w-[29px] flex-col text-[14px] font-bold">
      <span className="pl-[4px] leading-[20px]">F1</span>
      <TableIcon className="size-[22px]" />
      <DollarIcon className="mt-[7px] mb-[5px] ml-[2px] size-[20px]" />
    </div>
    <div className="flex w-[385px] flex-col gap-[10px]">
      <div className="flex gap-[4px]">
        <Field label="Forma de pagamento" className="w-[107px]"><Lookup /></Field>
        <Field label="Descrição da forma de pagamento" locked className="flex-1" />
      </div>
      <div className="flex gap-[4px]">
        <Field label="Condição" className="w-[107px]"><Lookup /></Field>
        <Field label="Descrição da condição" locked className="flex-1" />
      </div>
    </div>
    <div className="ml-[11px] flex w-[136px] flex-col gap-[1px]">
      <a href="#desconto-total" className="pl-[3px] text-[13px] leading-[18px] text-[#0000ff] underline">DESCONTO</a>
      <Field label="Desconto percentual" value="0,00 %" right size="text-[15px]" />
      <Field label="Desconto em valor" value="R$ 0,00" right size="text-[15px]" />
    </div>
    <div className="ml-[11px] flex w-[218px] flex-col">
      <label htmlFor="liquido" className="pl-[3px] text-[14px] leading-[22px] font-bold">TOTAL LÍQUIDO</label>
      <Field id="liquido" value="R$ 0,00" right size="text-[34px]" h="h-[52px]" />
    </div>
    <PushButton className="ml-[20px] h-[52px] w-[186px] gap-[6px] text-[13px] leading-[17px]">
      <BigSearchIcon className="size-[40px]" />
      <span>Vendas Pendentes<br />F6</span>
    </PushButton>
    <PushButton aria-label="Mais vendas" className="h-[52px] w-[18px] border-l-0">
      <Triangle className="w-[10px]" />
    </PushButton>
    <PushButton className="ml-auto h-[52px] w-[77px] flex-col gap-[3px] text-[13px] leading-[18px]">
      <HouseIcon className="size-[22px]" />
      Sair - F10
    </PushButton>
  </div>
);

const SaleWindow = () => (
  <section className="mr-[5px] rounded-t-[9px] border-2 border-[#1d2a33] bg-[#b9d1ea] shadow-[inset_-2px_-2px_0_#35bdd6]">
    <TitleBar />
    <div className="mr-[9px] mb-[9px] ml-[10px] bg-[#f0f0f0]">
      <div className="flex">
        <SaleForm />
        <ActionPanel />
      </div>
      <ItemPanel />
      <div className="flex h-[223px]">
        <div className="w-[227px] shrink-0 border-t border-r border-[#a0a0a0] bg-white p-[2px]">
          <div className="flex h-[112px] items-center justify-center border-2 border-[#efefef] text-[16px]">(Sem Foto)</div>
        </div>
        <ItemsGrid />
      </div>
      <PaymentBar />
    </div>
  </section>
);

const MainWindow = () => (
  <main className="relative mr-[139px] ml-[292px] border-r border-b border-[#e8e8e8] bg-white">
    <MenuBar />
    <div className="flex">
      <Sidebar />
      <div className="flex min-w-0 flex-1 flex-col">
        <Toolbar />
        <SaleWindow />
        <div className="flex h-[25px] items-start">
          <div className="mr-[208px] ml-[369px] flex h-[9px] flex-1 items-end overflow-hidden rounded-b-[8px] border-b-2 border-[#4b0a8c] bg-[#d5c8e6] pl-[10px] text-[15px] leading-[11px] text-[#0000ff]">
            2.0.0.0, 2.0.0.4
          </div>
        </div>
      </div>
    </div>
    <div className="absolute top-[480px] right-0 h-[35px] w-[4px] bg-[#00152b]" />
    <div className="absolute top-[617px] right-0 h-[9px] w-[4px] bg-[#00152b]" />
    <div className="absolute top-[965px] right-[156px] h-[5px] w-[10px] rounded-b-full bg-[#0b1c33]" />
  </main>
);

/* ---------- customers window ---------- */

const legend = [
  ['Inativo', 'bg-[#ff8080]'],
  ['Venda Bloqueada', 'bg-[#ffff80]'],
  ['Incompleto/Desatualizado', 'bg-[#a0ffff]'],
  ['Mês de Aniverário', 'bg-[#ffc080]'],
];

const details = [
  ['Limite', 'R$ 1.000,00', 'h-[60px] bg-[#e6ffe6]'],
  ['Dt. Cadastro', '01/01/2014', 'h-[35px] bg-[#a4ffa4]'],
  ['Dt. Atualizado', '09/10/2012', 'h-[35px] bg-[#e6ffe6]'],
  ['Última Compra', '', 'h-[35px] bg-[#a4ffa4]'],
];

const CustomerDialog = () => (
  <form className="absolute top-[20px] right-[335px] bottom-0 left-[314px] flex flex-col justify-end border-x-2 border-[#8a8a8a] bg-[#f0f0f0] shadow-[0_0_40px_rgba(0,0,0,0.45)]">
    <div className="flex flex-col gap-[13px] border-b border-[#dcdcdc] pr-[208px] pb-[72px]">
      <div className="flex items-center">
        <Label htmlFor="logradouro" bold size="text-[18px]" className="w-[249px]">Logradouro</Label>
        <Field id="logradouro" h="h-[35px]" className="ml-[4px] flex-1" />
        <Label htmlFor="numero" bold size="text-[18px]" className="w-[42px]">Nº</Label>
        <Field id="numero" h="h-[35px]" className="ml-[4px] w-[76px]" />
      </div>
      <div className="flex items-center">
        <Label htmlFor="bairro" bold size="text-[18px]" className="w-[249px]">Bairro</Label>
        <Field id="bairro" h="h-[35px]" className="ml-[4px] flex-1" />
      </div>
      <div className="flex items-center">
        <Label htmlFor="complemento" size="text-[19px]" className="w-[249px]">Complemento</Label>
        <Select id="complemento" h="h-[35px]" className="ml-[4px] w-[163px]" />
        <Field label="Detalhe do complemento" h="h-[35px]" className="ml-[11px] flex-1" />
      </div>
      <div className="flex items-center">
        <Label htmlFor="municipio" bold size="text-[18px]" className="w-[249px]">Município</Label>
        <Field id="municipio" value="1" right h="h-[35px]" size="text-[19px]" className="ml-[4px] w-[130px]">
          <Lookup label="Localizar município" />
        </Field>
        <Field label="Nome do município" value="FRANCISCO BELTRAO" locked h="h-[35px]" size="text-[19px]" className="ml-[3px] flex-1" />
        <Field label="UF" value="PR" locked h="h-[35px]" size="text-[19px]" className="ml-[7px] w-[35px]" />
      </div>
      <div className="flex items-start">
        <Label htmlFor="observacoes" size="text-[19px]" className="w-[249px] leading-[36px]"><u>O</u>bservações</Label>
        <textarea id="observacoes" className="ml-[4px] h-[60px] flex-1 resize-none border border-[#919191] bg-white outline-none" />
      </div>
    </div>
    <label className="flex h-[44px] items-center gap-[7px] border-b-2 border-[#989898] pl-[15px] text-[19px]">
      <input type="checkbox" defaultChecked className="peer sr-only" />
      <span className="flex size-[19px] items-center justify-center border-2 border-[#a0a0a0] bg-white">
        <svg viewBox="0 0 12 12" className="size-[13px]"><path d="m1 5.500 3.500 4L11 1.500" fill="none" stroke="#000" strokeWidth="2.800" /></svg>
      </span>
      Este cadastro está completo e atualizado?
    </label>
    <div className="flex h-[54px] items-end gap-[7px] pr-[37px] pb-[1px] pl-[8px] text-[16px]">
      <PushButton className="mr-auto h-[46px] w-[164px] gap-[7px]">
        <GearIcon className="size-[25px]" />
        <span>Mais <u>O</u>pções</span>
      </PushButton>
      <PushButton className="h-[46px] w-[164px] gap-[6px]">
        <CheckIcon className="size-[26px]" /> Salvar - F8
      </PushButton>
      <PushButton className="h-[46px] w-[164px] gap-[6px]">
        <CancelIcon className="size-[26px]" /> Cancelar - F10
      </PushButton>
    </div>
  </form>
);

const CustomersWindow = () => (
  <section className="absolute top-[317px] right-[436px] left-0 shadow-[0_0_40px_48px_rgba(0,0,0,0.15)]">
    <div className="relative flex h-[1096px] flex-col overflow-hidden border-t-2 border-r-2 border-b-2 border-[#555] bg-[#d7e4f2] pr-[12px] pb-[11px] pl-[8px]">
      <header className="flex h-[48px] shrink-0 items-center gap-[7px] bg-linear-to-b from-[#c0cedd] to-[#d7e4f2] pt-[9px] pl-[2px] text-[17px] text-[#a0a0a0]">
        <PowerIcon className="size-[27px]" />
        <h2>Clientes</h2>
      </header>
      <div className="flex h-[91px] shrink-0 items-end border-t border-l border-[#a0a0a0] bg-[#f0f0f0] pb-[19px] pl-[11px]">
        <div className="flex w-[163px] flex-col">
          <label htmlFor="localizar" className="flex justify-between text-[16px] leading-[27px] text-[#8e8e8e]">
            <span><u>L</u>ocalizar por:</span>
            <span>F3</span>
          </label>
          <input id="localizar" defaultValue="Identificador" className="h-[29px] w-full border-2 border-[#888] bg-white px-[4px] text-[17px] font-bold outline-none" />
        </div>
        <input aria-label="Texto da pesquisa" className="ml-[3px] h-[46px] flex-1 border-2 border-[#a0a0a0] bg-white" />
      </div>
      <div className="flex-1 border-t-4 border-l border-[#a0a0a0] bg-[#e6ffe6]">
        <table className="w-full table-fixed border-collapse text-left text-[19px]">
          <colgroup>
            <col className="w-[19px]" />
            <col className="w-[107px]" />
            <col />
          </colgroup>
          <thead>
            <tr className="h-[30px] bg-[#f0f0f0] text-[17px]">
              <th className="border border-black" />
              <th className="border border-black p-0 pt-[2px] pl-[3px]">Código</th>
              <th className="border border-black p-0 pt-[2px] pl-[3px]">Razão Social</th>
            </tr>
          </thead>
          <tbody>
            <tr className="h-[58px]">
              <td className="border border-black bg-[#f0f0f0] p-0 pl-[5px]">
                <svg viewBox="0 0 8 14" className="h-[15px] w-[9px]"><path d="M0 0v14l8-7z" /></svg>
              </td>
              <td className="border border-[#a0a0a0] p-0 pr-[4px] text-right">1</td>
              <td className="border border-[#a0a0a0] bg-[#316ac5] p-0 pl-[4px] text-white">CONSUMIDOR</td>
            </tr>
            <tr className="h-[59px] bg-[#a4ffa4]">
              <td className="border border-black bg-[#f0f0f0]" />
              <td className="border border-[#a0a0a0] p-0 pr-[4px] text-right">2</td>
              <td className="border border-[#a0a0a0] p-0 pl-[4px]">MINHA EMPRESA</td>
            </tr>
          </tbody>
        </table>
      </div>
      <div className="flex h-[28px] shrink-0 bg-[#f7f7f7]">
        <ScrollArrow left className="w-[30px]" />
        <div className="w-[900px] border-2 border-l-0 border-[#222] bg-[#f0f0f0]" />
        <div className="flex-1" />
        <ScrollArrow className="w-[28px]" />
      </div>
      <div className="flex h-[244px] shrink-0 bg-[#f0f0f0]">
        <fieldset className="mt-[6px] mb-[2px] flex w-[268px] flex-col gap-[4px] border border-[#d5d5d5] px-[6px] pt-[4px] text-[16px]">
          <legend className="ml-[3px] px-[2px] leading-[22px]">Legenda</legend>
          {legend.map(([text, color]) => (
            <div key={text} className="flex h-[29px] items-center gap-[3px]">
              <span className={clsx('h-[30px] w-[32px] rounded-[3px] border-2 border-[#222]', color)} />
              <span className="pt-[6px]">{text}</span>
            </div>
          ))}
        </fieldset>
        <div className="flex flex-1 flex-col">
          <div className="flex h-[40px] items-end border-b-2 border-[#222] bg-white pl-[9px]">
            <button type="button" className="-mb-[2px] h-[33px] w-[70px] border-t-2 border-r-2 border-l-2 border-[#222] bg-[#f0f0f0] pl-[5px] text-left text-[16px]">Geral</button>
          </div>
          <div className="mt-[3px] mb-[3px] flex flex-1">
            <div className="ml-[2px] flex-1 border border-[#a0a0a0] bg-white" />
            <div className="w-[429px] border-2 border-[#96a09c] bg-[#e6ffe6]">
              <table className="w-full table-fixed border-collapse text-[19px]">
                <colgroup>
                  <col className="w-[176px]" />
                  <col />
                </colgroup>
                <tbody>
                  {details.map(([name, value, tone]) => (
                    <tr key={name} className={tone}>
                      <th scope="row" className="border-r border-b border-[#a0a0a0] p-0 pl-[7px] text-left font-normal">{name}</th>
                      <td className="border-b border-[#a0a0a0] p-0 pl-[4px]">{value}</td>
                    </tr>
                  ))}
                </tbody>
              </table>
            </div>
          </div>
        </div>
      </div>
      <footer className="flex h-[62px] shrink-0 items-start justify-between border-t-2 border-l border-[#a0a0a0] bg-[#f0f0f0] pt-[5px] pr-[8px] pl-[7px] text-[16px]">
        <PushButton className="h-[46px] w-[153px] gap-[7px]">
          <GearIcon className="size-[25px]" /> Mais Opções
        </PushButton>
        <PushButton className="mt-[3px] h-[36px] w-[122px] gap-[6px]">
          <HouseIcon className="size-[26px]" /> Sair - F10
        </PushButton>
      </footer>
      <CustomerDialog />
    </div>
  </section>
);

export default function App() {
  return (
    <div className="relative min-h-screen overflow-hidden bg-white font-['DejaVu_Sans',Verdana,sans-serif] text-black">
      <svg viewBox="0 0 1155 1100" className="absolute top-[631px] right-0 w-[1155px]" aria-hidden="true">
        <path
          d="M1 550a577 549 0 1 0 1154 0a577 549 0 1 0-1154 0zM176 550a401 380 0 1 0 802 0a401 380 0 1 0-802 0z"
          fill="#00172d"
          fillRule="evenodd"
        />
      </svg>
      <CustomersWindow />
      <MainWindow />
    </div>
  );
}
